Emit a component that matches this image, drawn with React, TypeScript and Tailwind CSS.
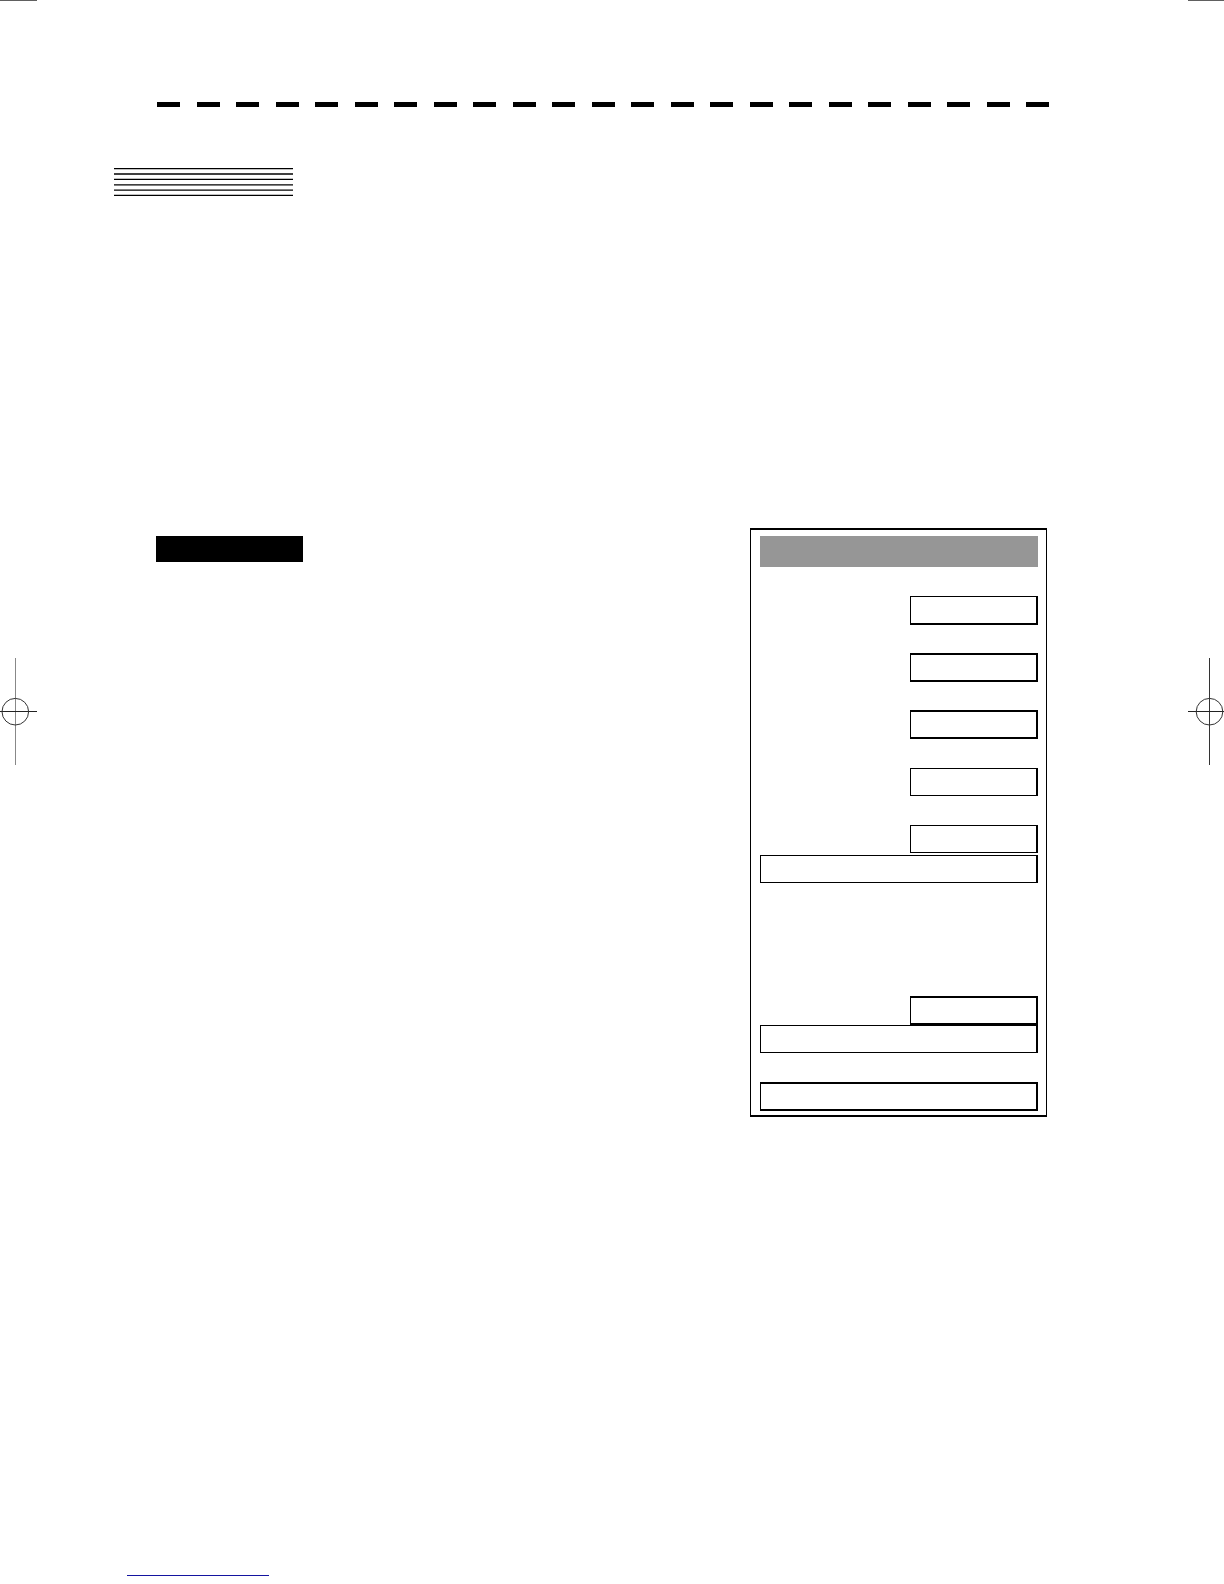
import React from 'react';

interface Field {
  label: string;
  className: string;
}

const DASH_COUNT = 23;

const fields: Field[] = [
  { label: 'Field 1', className: 'w-32 h-[29px] mt-[29px] border-t border-b-2' },
  { label: 'Field 2', className: 'w-32 h-[29px] mt-7 border-y-2' },
  { label: 'Field 3', className: 'w-32 h-[29px] mt-7 border-y-2' },
  { label: 'Field 4', className: 'w-32 h-7 mt-[29px] border-y' },
  { label: 'Field 5', className: 'w-32 h-7 mt-[29px] border-y' },
  { label: 'Field 5 details', className: 'w-full h-7 mt-0.5 border-y' },
  { label: 'Field 6', className: 'w-32 h-[29px] mt-[113px] border-y-2' },
  { label: 'Field 6 details', className: 'w-full h-7 border-y' },
  { label: 'Field 7', className: 'w-full h-[29px] mt-[29px] border-y-2' },
];

const stripes = [0.6, 6, 11.4, 16.8, 22.2, 27.4];

const DashedRule: React.FC = () => (
  <div className="mt-[101px] ml-[157px] mr-[175px] flex justify-between">
    {Array.from({ length: DASH_COUNT }, (_, i) => (
      <span key={i} className="h-[5px] w-[23px] bg-black" />
    ))}
  </div>
);

const Stripes: React.FC = () => (
  <svg
    className="mt-[61px] ml-[114px] block"
    width="179"
    height="28"
    viewBox="0 0 179 28"
    stroke="#000"
    strokeWidth="1.3"
    aria-hidden="true"
  >
    {stripes.map((y) => (
      <line key={y} x1="0" x2="179" y1={y} y2={y} />
    ))}
  </svg>
);

const LeftMark: React.FC = () => (
  <svg
    className="mt-[130px] block shrink-0"
    width="37"
    height="107"
    viewBox="0 0 37 107"
    fill="none"
    strokeWidth="1"
    aria-hidden="true"
  >
    <path d="M15.5 0v107" stroke="#888" />
    <path d="M0 53.5h37" stroke="#222" />
    <circle cx="15.3" cy="53.7" r="13.3" stroke="#333" />
  </svg>
);

const RightMark: React.FC = () => (
  <svg
    className="mt-[130px] block shrink-0"
    width="36"
    height="107"
    viewBox="0 0 36 107"
    fill="none"
    strokeWidth="1"
    aria-hidden="true"
  >
    <path d="M21.5 0v107" stroke="#333" />
    <path d="M0 53.5h36" stroke="#222" />
    <circle cx="21.5" cy="53.7" r="13.3" stroke="#333" />
  </svg>
);

const Panel: React.FC = () => (
  <form className="ml-auto mr-[141px] flex w-[297px] shrink-0 flex-col items-end border-x border-y-2 border-black pt-1.5 pr-2 pb-1 pl-[9px]">
    <div className="h-[31px] w-full bg-[#969696]" />
    {fields.map((field) => (
      <input
        key={field.label}
        type="text"
        aria-label={field.label}
        className={`block border-l border-r-2 border-black px-2 font-['Liberation_Sans',sans-serif] text-sm outline-none ${field.className}`}
      />
    ))}
  </form>
);

const App: React.FC = () => {
  return (
    <div className="flex min-h-screen flex-col bg-white">
      <div className="flex justify-between">
        <span className="h-px w-[37px] bg-[#606060]" />
        <span className="h-px w-9 bg-[#606060]" />
      </div>

      <DashedRule />
      <Stripes />

      <main className="mt-[332px] flex items-start">
        <LeftMark />
        <div className="mt-2 ml-[119px] h-[26px] w-[147px] bg-black" />
        <Panel />
        <RightMark />
      </main>

      <footer className="mt-auto pb-2 pl-[127px]">
        <div className="h-px w-[142px] bg-[#1414a0]" />
      </footer>
    </div>
  );
};

export default App;
